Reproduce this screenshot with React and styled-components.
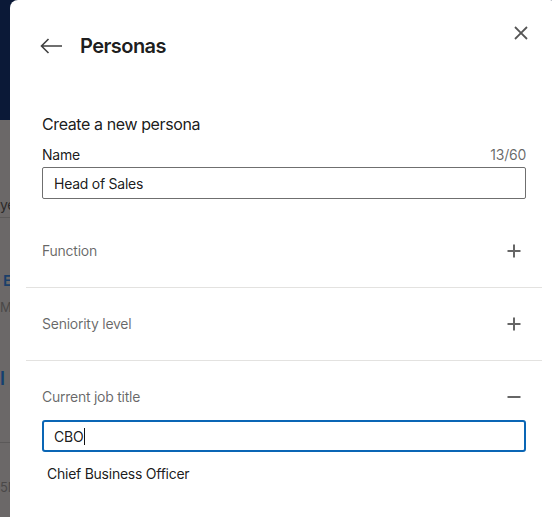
import React from "react";
import styled, { createGlobalStyle } from "styled-components";

const Global = createGlobalStyle`
  html, body { margin: 0; padding: 0; }
  body {
    overflow: hidden;
    font-family: Inter, "Liberation Sans", Arial, sans-serif;
    letter-spacing: -0.25px;
    -webkit-font-smoothing: antialiased;
  }
  * { box-sizing: border-box; }
`;

/* ---------- background page (dimmed) ---------- */
const Page = styled.div`
  width: 100vw;
  height: 100vh;
  background: #6b6868;
  display: flex;
  flex-direction: column;
  overflow: hidden;
`;
const TopBar = styled.div`
  flex: none;
  height: 120px;
  background: #0b1937;
`;
const BgRow = styled.div`
  flex: none;
  height: ${(p) => p.$h}px;
  border-bottom: ${(p) => (p.$line ? "1px solid #5b5959" : "none")};
  display: flex;
  flex-direction: column;
`;
const BgText = styled.span`
  display: block;
  white-space: nowrap;
  margin-left: ${(p) => p.$ml || 0}px;
  margin-top: ${(p) => p.$mt || 0}px;
  font-size: ${(p) => p.$size || 14}px;
  line-height: 20px;
  font-weight: ${(p) => (p.$bold ? 600 : 400)};
  color: ${(p) => p.$color || "#2a2828"};
`;

/* ---------- modal ---------- */
const Modal = styled.div`
  position: fixed;
  top: 0;
  left: 10px;
  width: 548px;
  height: 100vh;
  background: #ffffff;
  border-radius: 8px 8px 0 0;
  color: rgba(0, 0, 0, 0.9);
`;
const Header = styled.div`
  display: flex;
  align-items: center;
  gap: 17px;
  padding: 34px 0 0 29px;
`;
const IconButton = styled.button`
  border: none;
  background: none;
  padding: 0;
  margin: 0;
  width: 24px;
  height: 24px;
  display: flex;
  align-items: center;
  justify-content: center;
  cursor: pointer;
  color: ${(p) => p.$color || "#666"};
`;
const CloseButton = styled(IconButton)`
  position: absolute;
  top: 21px;
  right: 25px;
`;
const Title = styled.h2`
  margin: 0;
  font-size: 20px;
  line-height: 24px;
  font-weight: 600;
  letter-spacing: -0.55px;
  color: rgba(0, 0, 0, 0.9);
`;
const Body = styled.div`
  padding: 0 16px;
`;
const NameSection = styled.section`
  padding: 54px 16px 16px;
`;
const Heading = styled.h3`
  margin: 0;
  font-size: 16px;
  line-height: 24px;
  font-weight: 400;
  letter-spacing: -0.4px;
  color: rgba(0, 0, 0, 0.9);
`;
const LabelRow = styled.div`
  display: flex;
  justify-content: space-between;
  margin-top: 9px;
  font-size: 14px;
  line-height: 20px;
`;
const Label = styled.label`
  color: rgba(0, 0, 0, 0.9);
`;
const Counter = styled.span`
  color: rgba(0, 0, 0, 0.6);
`;
const TextInput = styled.input`
  display: block;
  width: 100%;
  height: 32px;
  margin-top: 2px;
  padding: 0 11px;
  border: 1px solid #6f6f6f;
  border-radius: 2px;
  font-family: inherit;
  font-size: 14px;
  letter-spacing: -0.25px;
  color: rgba(0, 0, 0, 0.9);
  outline: none;
  background: #fff;
`;
const FocusedField = styled.div`
  display: flex;
  align-items: center;
  height: 32px;
  padding: 0 10px;
  border: 2px solid #0a66b5;
  border-radius: 3px;
  font-size: 14px;
  color: rgba(0, 0, 0, 0.9);
`;
const Caret = styled.span`
  display: inline-block;
  width: 1px;
  height: 17px;
  background: #111;
  margin-left: 1px;
`;
const Accordion = styled.section`
  border-bottom: ${(p) => (p.$last ? "none" : "1px solid #e3e2e0")};
  padding: 0 16px;
`;
const AccordionHead = styled.div`
  display: flex;
  justify-content: space-between;
  align-items: center;
  padding: 24px 0 ${(p) => (p.$open ? 11 : 24)}px;
  font-size: 14px;
  line-height: 24px;
  color: rgba(0, 0, 0, 0.6);
`;
const Option = styled.div`
  padding: 12px 5px;
  font-size: 14px;
  line-height: 20px;
  color: rgba(0, 0, 0, 0.9);
`;

const PlusIcon = () => (
  <svg width="24" height="24" viewBox="0 0 24 24">
    <path d="M12 5.5v13M5.5 12h13" stroke="currentColor" strokeWidth="2" fill="none" />
  </svg>
);
const MinusIcon = () => (
  <svg width="24" height="24" viewBox="0 0 24 24">
    <path d="M5.5 12h13" stroke="currentColor" strokeWidth="2" fill="none" />
  </svg>
);
const ArrowLeft = () => (
  <svg width="24" height="24" viewBox="0 0 24 24">
    <path
      d="M23 12H2.5M9.5 5l-7 7 7 7"
      stroke="currentColor"
      strokeWidth="1.6"
      fill="none"
      strokeLinejoin="miter"
    />
  </svg>
);
const CloseIcon = () => (
  <svg width="24" height="24" viewBox="0 0 24 24">
    <path d="M6 6l12 12M18 6L6 18" stroke="currentColor" strokeWidth="1.8" fill="none" />
  </svg>
);

const sections = [
  { title: "Function", open: false },
  { title: "Seniority level", open: false },
  { title: "Current job title", open: true },
];

export default function App() {
  return (
    <>
      <Global />
      <Page>
        <TopBar />
        <BgRow $h={98} $line>
          <BgText $mt={75} $color="#2c2a2a">yesterday</BgText>
        </BgRow>
        <BgRow $h={225} $line>
          <BgText $mt={53} $ml={3} $bold $size={15} $color="#1a3f6a">Executive</BgText>
          <BgText $mt={6} $size={13} $color="#4a4848">Manager</BgText>
          <BgText $mt={52} $bold $size={19} $color="#134070">l p</BgText>
        </BgRow>
        <BgRow $h={100}>
          <BgText $mt={34} $size={13} $color="#4a4848">5M</BgText>
        </BgRow>
      </Page>

      <Modal role="dialog">
        <Header>
          <IconButton $color="#404040" aria-label="Back">
            <ArrowLeft />
          </IconButton>
          <Title>Personas</Title>
        </Header>
        <CloseButton $color="#555" aria-label="Close">
          <CloseIcon />
        </CloseButton>
        <Body>
          <NameSection>
            <Heading>Create a new persona</Heading>
            <LabelRow>
              <Label>Name</Label>
              <Counter>13/60</Counter>
            </LabelRow>
            <TextInput readOnly value="Head of Sales" />
          </NameSection>
          {sections.map((s, i) => (
            <Accordion key={s.title} $last={i === sections.length - 1}>
              <AccordionHead $open={s.open}>
                <span>{s.title}</span>
                <IconButton $color="#666">{s.open ? <MinusIcon /> : <PlusIcon />}</IconButton>
              </AccordionHead>
              {s.open && (
                <>
                  <FocusedField>
                    CBO
                    <Caret />
                  </FocusedField>
                  <Option>Chief Business Officer</Option>
                </>
              )}
            </Accordion>
          ))}
        </Body>
      </Modal>
    </>
  );
}
